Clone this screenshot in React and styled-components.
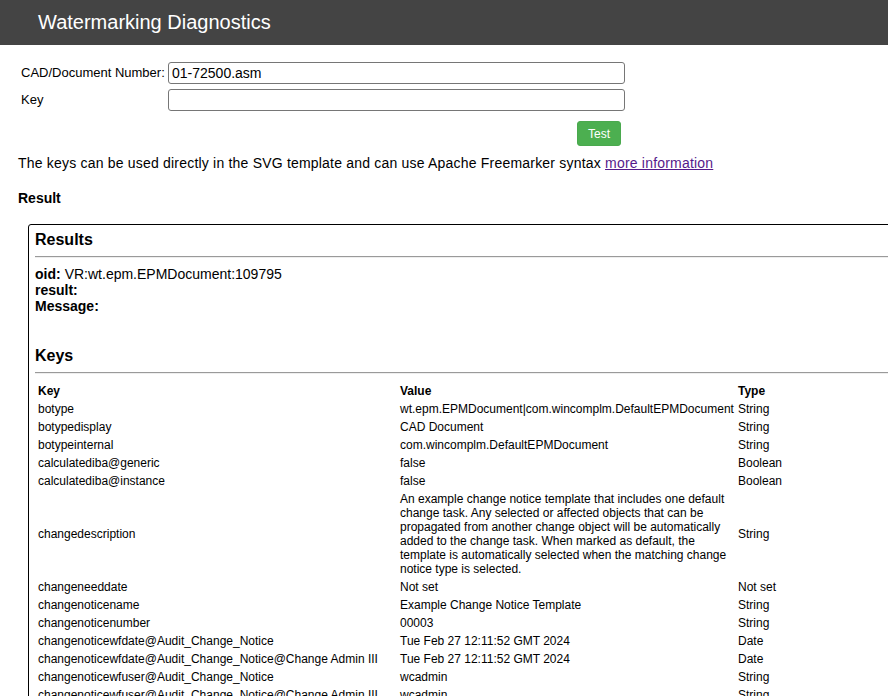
import React from 'react';
import styled, {createGlobalStyle} from 'styled-components';

const GlobalStyle = createGlobalStyle`
    html, body {
        margin: 0;
        padding: 0;
        background: #fff;
        overflow: hidden;
    }
    body {
        font-family: "Liberation Sans", Arial, sans-serif;
        color: #000;
    }
`;

const Header = styled.header`
    height: 45px;
    background: #444;
    display: flex;
    align-items: center;
    padding-left: 38px;
    >h1{
        margin: 0;
        font-size: 20px;
        font-weight: normal;
        color: #fff;
    }
`;

const Form = styled.div`
    display: grid;
    grid-template-columns: 147px 457px;
    row-gap: 5px;
    padding: 17px 0 0 21px;
`;

const Label = styled.label`
    font-size: 13px;
    line-height: 22px;
    align-self: center;
`;

const Input = styled.input`
    box-sizing: border-box;
    height: 22px;
    width: 100%;
    border: 1px solid #767676;
    border-radius: 3px;
    padding: 0 3px;
    font-family: "Liberation Sans", Arial, sans-serif;
    font-size: 14px;
    color: #000;
    outline: none;
`;

const ButtonCell = styled.div`
    grid-column: 2;
    display: flex;
    justify-content: flex-end;
    padding: 5px 4px 0 0;
`;

const Button = styled.button`
    width: 44px;
    height: 25px;
    background: #4caf50;
    color: #fff;
    border: 1px solid #4aa94e;
    border-radius: 3px;
    font-family: "Liberation Sans", Arial, sans-serif;
    font-size: 12px;
    padding: 0;
    cursor: pointer;
`;

const Info = styled.p`
    margin: 8px 0 0 18px;
    font-size: 14px;
    line-height: 18px;
    letter-spacing: 0.2px;
    >a{
        color: #551a8b;
        text-decoration: underline;
    }
`;

const Caption = styled.div`
    margin: 17px 0 0 18px;
    font-size: 14px;
    font-weight: bold;
    line-height: 18px;
`;

const ResultBox = styled.section`
    margin: 17px 0 0 28px;
    width: 900px;
    border: 1px solid #000;
    border-radius: 3px;
    padding: 4px 0 20px 6px;
`;

const Heading = styled.h2`
    margin: 0;
    font-size: 16px;
    font-weight: bold;
    line-height: 22px;
    margin-top: ${p => p.$top || 0}px;
`;

const Rule = styled.hr`
    margin: 5px 0 8px;
    border: none;
    border-top: 1px solid #9a9a9a;
    border-bottom: 1px solid #eee;
`;

const Meta = styled.div`
    font-size: 14px;
    line-height: 16px;
    >div>b{
        margin-right: 4px;
    }
`;

const KeyTable = styled.table`
    margin-left: 1px;
    border-collapse: collapse;
    table-layout: fixed;
    width: 820px;
    font-size: 12px;
    line-height: 14px;
    col.key{ width: 362px; }
    col.value{ width: 338px; }
    th{
        text-align: left;
        font-weight: bold;
        padding: 2px;
    }
    td{
        padding: 2px;
        vertical-align: middle;
    }
`;

const rows = [
    ['botype', 'wt.epm.EPMDocument|com.wincomplm.DefaultEPMDocument', 'String'],
    ['botypedisplay', 'CAD Document', 'String'],
    ['botypeinternal', 'com.wincomplm.DefaultEPMDocument', 'String'],
    ['calculatediba@generic', 'false', 'Boolean'],
    ['calculatediba@instance', 'false', 'Boolean'],
    ['changedescription', 'An example change notice template that includes one default change task. Any selected or affected objects that can be propagated from another change object will be automatically added to the change task. When marked as default, the template is automatically selected when the matching change notice type is selected.', 'String'],
    ['changeneeddate', 'Not set', 'Not set'],
    ['changenoticename', 'Example Change Notice Template', 'String'],
    ['changenoticenumber', '00003', 'String'],
    ['changenoticewfdate@Audit_Change_Notice', 'Tue Feb 27 12:11:52 GMT 2024', 'Date'],
    ['changenoticewfdate@Audit_Change_Notice@Change Admin III', 'Tue Feb 27 12:11:52 GMT 2024', 'Date'],
    ['changenoticewfuser@Audit_Change_Notice', 'wcadmin', 'String'],
    ['changenoticewfuser@Audit_Change_Notice@Change Admin III', 'wcadmin', 'String'],
];

export default function App() {
    return <>
        <GlobalStyle/>
        <Header><h1>Watermarking Diagnostics</h1></Header>
        <Form>
            <Label>CAD/Document Number:</Label>
            <Input defaultValue="01-72500.asm"/>
            <Label>Key</Label>
            <Input defaultValue=""/>
            <ButtonCell><Button>Test</Button></ButtonCell>
        </Form>
        <Info>
            The keys can be used directly in the SVG template and can use Apache Freemarker syntax <a href="#">more information</a>
        </Info>
        <Caption>Result</Caption>
        <ResultBox>
            <Heading>Results</Heading>
            <Rule/>
            <Meta>
                <div><b>oid:</b>VR:wt.epm.EPMDocument:109795</div>
                <div><b>result:</b></div>
                <div><b>Message:</b></div>
            </Meta>
            <Heading $top={31}>Keys</Heading>
            <Rule/>
            <KeyTable>
                <colgroup>
                    <col className="key"/>
                    <col className="value"/>
                    <col/>
                </colgroup>
                <thead>
                    <tr><th>Key</th><th>Value</th><th>Type</th></tr>
                </thead>
                <tbody>
                    {rows.map(([k, v, t]) => <tr key={k}>
                        <td>{k}</td>
                        <td>{v}</td>
                        <td>{t}</td>
                    </tr>)}
                </tbody>
            </KeyTable>
        </ResultBox>
    </>;
}
